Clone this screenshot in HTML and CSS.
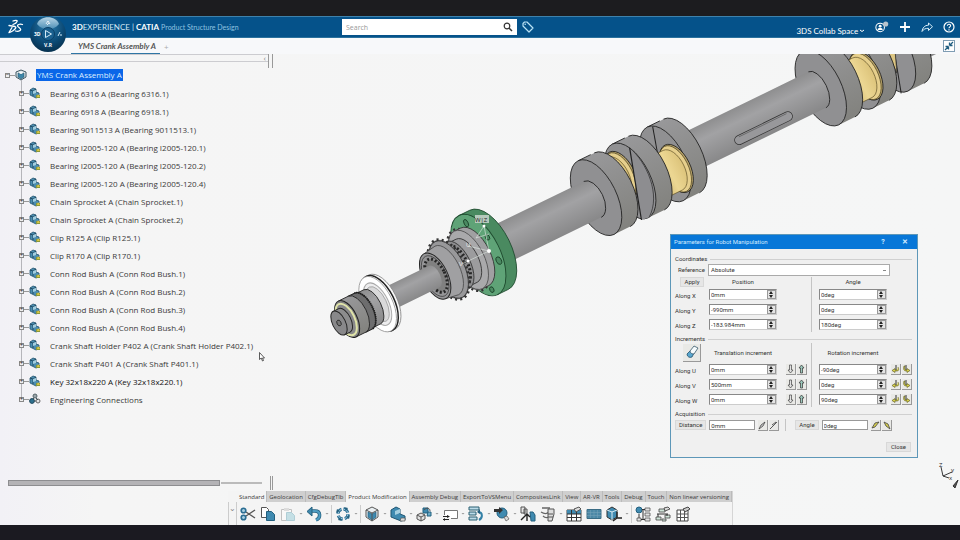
FILE: index.html
```html
<html lang="en">

<head>
  <meta charset="UTF-8">
  <meta name="viewport" content="width=device-width, initial-scale=1.0">
  <title>Product Structure Design</title>
  <link rel="stylesheet" href="styles.css">
</head>

<body>

  <!-- shared icons -->
  <svg class="sprite" width="0" height="0" aria-hidden="true">
    <symbol id="i-part" viewBox="0 0 12 12">
      <path d="M1 3l3-2 3 1v3l3 1v4l-3 1-6-3z" fill="#4b8db0" stroke="#24546f" stroke-width=".8" />
      <path d="M1 3l3 1v5M4 4l3-2" fill="none" stroke="#173f57" stroke-width=".8" />
      <path d="M4 4l3-1v3l-3 1z" fill="#a4cfe0" />
      <path d="M7 8h4v3H7z" fill="#8b9a3a" />
      <path d="M9 7l2 3H8z" fill="#dcc64a" />
    </symbol>
    <symbol id="i-root" viewBox="0 0 12 12">
      <path d="M1 3l5-2 5 2v5l-5 3-5-3z" fill="#dfe8ec" stroke="#3f5763" />
      <path d="M3 4l3 1 3-1v4l-3 2-3-2z" fill="#3d86a8" stroke="#28566c" stroke-width=".6" />
      <path d="M4 4l2-1 2 1-2 1z" fill="#fff" />
    </symbol>
    <symbol id="i-conn" viewBox="0 0 12 12">
      <circle cx="6" cy="3" r="2" fill="#9aa5aa" stroke="#56646b" />
      <circle cx="3" cy="8" r="2.400" fill="#2f718f" stroke="#1d475c" />
      <circle cx="9" cy="8" r="2" fill="#e6e6e6" stroke="#666" />
      <path d="M5 5L4 6M7 5l2 2M5 8h2" stroke="#44545b" />
    </symbol>
    <symbol id="i-up" viewBox="0 0 9 10">
      <path d="M4.500 1l2.500 3H5.500v5h-2V4H2z" fill="#9cc9bd" stroke="#333" stroke-width=".7" />
    </symbol>
    <symbol id="i-down" viewBox="0 0 9 10">
      <path d="M4.500 9l2.500-3H5.500V1h-2v5H2z" fill="#e2e2e2" stroke="#444" stroke-width=".7" />
    </symbol>
    <symbol id="i-rotl" viewBox="0 0 9 10">
      <path d="M5 1v5" stroke="#333" />
      <path d="M7 3c1 2 1 4-1 4H4v1.500L1 6.500l3-2V6h2" fill="#d7cf4b" stroke="#5c5a20" stroke-width=".6" />
    </symbol>
    <symbol id="i-rotr" viewBox="0 0 9 10">
      <path d="M4 1v5" stroke="#333" />
      <path d="M2 2c-1 3 0 5 2 5h1v1.500l3-2-3-2V6H4C3 6 2 4 3 2z" fill="#d7cf4b" stroke="#5c5a20" stroke-width=".6" />
    </symbol>
  </svg>

  <div class="band band-top"></div>

  <header class="header">
    <div class="header-left">
      <svg class="logo" viewBox="0 0 16 16" aria-hidden="true">
        <g fill="none" stroke="#fff" stroke-width="1.300" stroke-linecap="round" stroke-linejoin="round">
          <path d="M5 2c2-1 5-1 4 .5C8.500 4 6.500 5 5 5.500" />
          <path d="M1 6.500l6 1c2 .6 0 3-2 4.200-1.300.8-3 1.600-4 1.800L4 8.500" />
          <path d="M14.500 5.500c-2-.6-4.500-.2-5 1-.4 1.300 3.500 2.700 3.200 4.200-.3 1.600-3.200 2-5.200 1.300" />
        </g>
      </svg>
      <div class="brand"><b>3D</b>EXPERIENCE | <b>CATIA</b> <span class="brand-app">Product Structure Design</span></div>
    </div>
    <form class="search">
      <input class="search-input" type="text" placeholder="Search" aria-label="Search">
      <button class="search-btn" type="button" aria-label="Run search">
        <svg viewBox="0 0 10 10"><circle cx="4" cy="4" r="2.800" fill="none" stroke="#333" stroke-width="1.200" /><path d="M6 6l3 3" stroke="#333" stroke-width="1.500" /></svg>
      </button>
    </form>
    <button class="icon-btn" type="button" aria-label="Tags">
      <svg viewBox="0 0 12 12"><path d="M1 2.500L2.500 1H5l6 6-4 4-6-6z" fill="none" stroke="#b9e2f5" stroke-width="1.200" stroke-linejoin="round" /><circle cx="3.200" cy="3.200" r=".8" fill="#b9e2f5" /></svg>
    </button>
    <div class="header-right">
      <button class="space-btn" type="button">3DS Collab Space
        <svg viewBox="0 0 6 4"><path d="M1 1l2 1.500L5 1" fill="none" stroke="#fff" /></svg>
      </button>
      <button class="icon-btn" type="button" aria-label="Profile">
        <svg viewBox="0 0 16 14"><circle cx="6" cy="7.500" r="5" fill="none" stroke="#fff" stroke-width="1.200" /><circle cx="6" cy="6" r="1.700" fill="#fff" /><path d="M3 10.500c0-3.500 6-3.500 6 0z" fill="#fff" /><circle cx="12.500" cy="3.500" r="3" fill="#b9c4cd" /></svg>
      </button>
      <button class="icon-btn" type="button" aria-label="Add">
        <svg viewBox="0 0 12 12"><path d="M6 1v10M1 6h10" stroke="#fff" stroke-width="1.800" /></svg>
      </button>
      <button class="icon-btn" type="button" aria-label="Share">
        <svg viewBox="0 0 12 12"><path d="M7.500 2v2.200C3.500 4.200 1.500 7 1 10.500c1.700-2.500 3.500-3.200 6.500-3.200v2.200l4-3.800z" fill="none" stroke="#d7edf8" stroke-linejoin="round" /></svg>
      </button>
      <button class="icon-btn" type="button" aria-label="Help">
        <svg viewBox="0 0 12 12"><circle cx="6" cy="6" r="5" fill="none" stroke="#fff" stroke-width="1.200" /><path d="M4.400 4.800c0-2.300 3.400-2 3.200 0C7.500 6 6 5.900 6 7.300M6 8.200v1.200" fill="none" stroke="#fff" stroke-width="1.100" /></svg>
      </button>
    </div>
  </header>

  <svg class="compass" viewBox="0 0 38 38" role="img" aria-label="Compass">
    <defs>
      <radialGradient id="ball" cx=".5" cy=".3" r=".7">
        <stop offset="0" stop-color="#2f7fae" />
        <stop offset=".6" stop-color="#0d4d79" />
        <stop offset="1" stop-color="#07314f" />
      </radialGradient>
      <linearGradient id="gloss" x1="0" y1="0" x2="0" y2="1">
        <stop offset="0" stop-color="#b7d5e6" />
        <stop offset="1" stop-color="#4d8fb6" />
      </linearGradient>
    </defs>
    <circle cx="19" cy="19" r="18" fill="url(#ball)" />
    <path d="M8 9C11 0 27 0 30 9c-3 4-7 5-11 5S11 13 8 9z" fill="url(#gloss)" />
    <circle cx="19" cy="19" r="6.500" fill="#1a608f" stroke="#0a3f66" />
    <path d="M16.500 15.500l6 3.500-6 3.500z" fill="none" stroke="#d5ebf7" />
    <path d="M17 9l2-3 2 3M18 10l2-2" fill="none" stroke="#fff" stroke-width=".8" />
    <path d="M29 21l2-4M31 20h2" fill="none" stroke="#d5ebf7" />
    <text x="5" y="21" class="compass-text">3D</text>
    <text x="15" y="32" class="compass-text">V.R</text>
  </svg>

  <nav class="tabs">
    <a class="tab" href="#">YMS Crank Assembly A</a>
    <button class="tab-add" type="button" aria-label="New tab">+</button>
    <button class="collapse" type="button" aria-label="Exit full view">
      <svg viewBox="0 0 10 10"><path d="M5.500 4.500V1.500M5.500 4.500h3M5.500 4.500L9 1M4.500 5.500v3M4.500 5.500h-3M4.500 5.500L1 9" stroke="#1f5d80" stroke-width="1.300" fill="none" /></svg>
    </button>
  </nav>

  <main class="workspace">

    <!-- 3D view: everything sits on the crank axis, x runs along it -->
    <svg class="scene" viewBox="0 54 960 471" preserveAspectRatio="xMidYMid slice" role="img" aria-label="Crank assembly">
      <defs>
        <linearGradient id="shaft" x1="0" y1="0" x2="0" y2="1">
          <stop offset="0" stop-color="#8e8e8f" />
          <stop offset=".35" stop-color="#a2a2a4" />
          <stop offset="1" stop-color="#888889" />
        </linearGradient>
        <linearGradient id="rim" x1="0" y1="0" x2="0" y2="1">
          <stop offset="0" stop-color="#98989a" />
          <stop offset="1" stop-color="#82827e" />
        </linearGradient>
        <linearGradient id="gold" x1="0" y1="0" x2="1" y2="0">
          <stop offset="0" stop-color="#d0b76e" />
          <stop offset=".5" stop-color="#ecd793" />
          <stop offset="1" stop-color="#dcc37a" />
        </linearGradient>
        <g id="disc">
          <path d="M0-41H18A20.500 41 0 0 1 18 41H0z" fill="url(#rim)" />
          <path d="M0-41H14M18-41A20.500 41 0 0 1 18 41" fill="none" stroke="#222" stroke-width=".8" />
          <ellipse rx="20.500" ry="41" fill="#909092" stroke="#222" stroke-width=".8" />
        </g>
        <g id="pin">
          <ellipse rx="14" ry="26" fill="#b8a368" stroke="#222" stroke-width=".8" />
          <ellipse cx="-1" rx="13" ry="25" fill="#e6cf8c" stroke="#3c3418" stroke-width=".6" />
          <path d="M-22-22H-4A12 22 0 0 1-4 22H-22z" fill="url(#gold)" stroke="#5b4c22" stroke-width=".6" />
        </g>
      </defs>

      <g transform="translate(339 323) rotate(-26)">
        <path d="M631-20H700V20H631z" fill="url(#shaft)" />

        <!-- rear crank throw -->
        <use href="#disc" x="613" />
        <path d="M627-30L606 40" stroke="#222" />
        <path d="M603-38C612-36 620-20 618 2L611 20C612-8 608-20 598-34z" fill="#dcc582" stroke="#333" stroke-width=".7" />
        <use href="#disc" x="574" />
        <use href="#pin" x="582" y="9" />
        <use href="#disc" x="536" />

        <!-- shaft with keyway -->
        <path d="M381-20H532A10 20 0 0 1 532 20H381z" fill="url(#shaft)" />
        <path d="M532-20A10 20 0 0 1 532 20" fill="none" stroke="#222" stroke-width=".8" />
        <path d="M440 11H494" stroke="#333" stroke-width="10" stroke-linecap="round" />
        <path d="M440 11H494" stroke="#98989b" stroke-width="8.600" stroke-linecap="round" />
        <path d="M441 8H494" stroke="#555" stroke-width=".6" />

        <!-- front crank throw -->
        <use href="#disc" x="363" />
        <path d="M368-39L361-14" stroke="#222" />
        <use href="#pin" x="371" y="9" />
        <use href="#disc" x="324" />
        <use href="#pin" x="318" y="-9" />
        <path d="M338-30C346-14 348 26 326 41L317 40z" fill="#8d8d90" />
        <path d="M338-30L317 40" stroke="#222" stroke-width="1.200" />
        <path d="M338-30C347-10 346 26 325 41" fill="none" stroke="#222" stroke-width=".6" />
        <use href="#disc" x="286" />

        <path d="M167-20H282A11 20 0 0 1 282 20H167z" fill="url(#shaft)" />
        <path d="M282-20A11 20 0 0 1 282 20" fill="none" stroke="#222" stroke-width=".8" />

        <!-- green flange -->
        <path d="M155-44H167A22 44 0 0 1 167 44H155z" fill="#4a8a60" stroke="#1e4a2e" stroke-width=".8" />
        <ellipse cx="155" rx="22" ry="44" fill="#5fa377" stroke="#1e4a2e" stroke-width=".9" />
        <g fill="#4b8a62" stroke="#153a22" stroke-width=".8">
          <ellipse cx="158" cy="-34" rx="2" ry="4" />
          <ellipse cx="171" cy="-12" rx="2" ry="3" />
          <ellipse cx="171" cy="14" rx="2.500" ry="4" />
          <ellipse cx="152" cy="37" rx="2" ry="3" />
        </g>

        <!-- sprockets -->
        <ellipse cx="144" rx="17" ry="33" fill="#8a8a8b" stroke="#333" stroke-width="3" stroke-dasharray="2 3" />
        <path d="M144-32H151A16 32 0 0 1 151 32H144z" fill="#a0a0a2" stroke="#333" stroke-width=".8" />
        <ellipse cx="144" rx="16" ry="32" fill="#a9a9ab" stroke="#444" stroke-width=".7" />
        <path d="M132-24H142A12 24 0 0 1 142 24H132z" fill="#9c9c9e" stroke="#333" stroke-width=".8" />
        <ellipse cx="132" rx="13" ry="26" fill="#8c8c8e" stroke="#333" stroke-width=".8" />
        <ellipse cx="132" rx="10" ry="21" fill="none" stroke="#262626" stroke-width="3" stroke-dasharray="2 2" />
        <ellipse cx="122" rx="17" ry="32" fill="#8a8a8b" stroke="#333" stroke-width="3" stroke-dasharray="2 3" />
        <ellipse cx="122" rx="16" ry="31" fill="#98989a" stroke="#333" stroke-width=".8" />
        <path d="M107-25L120-27A13 27 0 0 1 120 27L107 25z" fill="#a0a0a2" stroke="#444" stroke-width=".7" />
        <ellipse cx="107" rx="12.500" ry="25" fill="#959597" stroke="#262626" />
        <ellipse cx="108" rx="9" ry="18" fill="#808080" stroke="#262626" stroke-width="3" stroke-dasharray="2 2" />
        <ellipse cx="107" rx="11" ry="22" fill="none" stroke="#2c2c2c" stroke-width=".6" />

        <path d="M47-12H106A6 12 0 0 1 106 12H47z" fill="url(#shaft)" />

        <!-- white seal ring -->
        <path d="M43-30H48A15 30 0 0 1 48 30H43z" fill="#f7f7f7" stroke="#888" stroke-width=".8" />
        <ellipse cx="45" rx="15" ry="30" fill="#fff" stroke="#222" stroke-width="1.500" />
        <ellipse cx="43" rx="15" ry="30" fill="#fff" stroke="#999" stroke-width=".8" />
        <ellipse cx="43" rx="11" ry="23" fill="#ededee" stroke="#aaa" />
        <ellipse cx="43" rx="9" ry="19" fill="#d9d9da" stroke="#999" stroke-width=".7" />

        <!-- shaft nose -->
        <path d="M26-19H37A9 19 0 0 1 37 19H26z" fill="url(#shaft)" stroke="#222" stroke-width=".8" />
        <path d="M20-20H27A10 20 0 0 1 27 20H20z" fill="#6d6d6e" stroke="#222" />
        <path d="M27-20A10 20 0 0 1 27 20" fill="none" stroke="#1c1c1c" stroke-width="2" stroke-dasharray="1 1" />
        <path d="M9-20H20A10 20 0 0 1 20 20H9z" fill="url(#rim)" stroke="#222" stroke-width=".8" />
        <ellipse cx="9" rx="10" ry="20" fill="#808081" stroke="#222" />
        <ellipse cx="8" rx="8.500" ry="17" fill="#88888a" stroke="#dfe3a8" stroke-width="2" />
        <path d="M0-13H6A6.500 13 0 0 1 6 13H0z" fill="#8c8c8d" stroke="#222" stroke-width=".9" />
        <ellipse rx="6.500" ry="13" fill="#88888a" stroke="#222" />
        <ellipse rx="2" ry="3" fill="#777" stroke="#222" stroke-width=".8" />
      </g>

      <!-- robot handle -->
      <path d="M484 226L489 251L468 246M484 226l-8 12M489 251l-27 13M476 238l13-4" fill="none" stroke="#dfe9e2" stroke-width=".6" />
      <circle cx="489" cy="251" r="2" fill="#fff" />
      <circle cx="484" cy="226" r="1.500" fill="#fff" />
      <circle cx="468" cy="261" r="1.500" fill="#fff" />
      <rect x="475" y="215" width="14" height="8" fill="#b5c9bb" />
      <text x="475" y="222" class="axis-label">W|Z</text>
      <text x="466" y="247" class="axis-label light">U</text>
      <text x="459" y="266" class="axis-label light">V</text>

      <!-- view axes -->
      <path d="M943 476l-2-9M943 476l9-4M943 476l6 2" fill="none" stroke="#222" stroke-width=".9" />
      <text x="939" y="467" class="axis-label">Z</text>
      <text x="951" y="472" class="axis-label">y</text>
      <text x="949" y="480" class="axis-label">x</text>
      <path d="M958 480l-3 8-2-2z" fill="#555" stroke="#333" />
    </svg>

    <section class="tree-panel" aria-label="Structure tree">
      <div class="panel-bar"><span>‹</span></div>
      <ul class="tree">
        <li class="root"><button class="expander" type="button" aria-label="Collapse">−</button><svg><use href="#i-root" /></svg><span class="selected">YMS Crank Assembly A</span></li>
        <li><button class="expander" type="button" aria-label="Expand">+</button><svg><use href="#i-part" /></svg><span>Bearing 6316 A (Bearing 6316.1)</span></li>
        <li><button class="expander" type="button" aria-label="Expand">+</button><svg><use href="#i-part" /></svg><span>Bearing 6918 A (Bearing 6918.1)</span></li>
        <li><button class="expander" type="button" aria-label="Expand">+</button><svg><use href="#i-part" /></svg><span>Bearing 9011513 A (Bearing 9011513.1)</span></li>
        <li><button class="expander" type="button" aria-label="Expand">+</button><svg><use href="#i-part" /></svg><span>Bearing I2005-120 A (Bearing I2005-120.1)</span></li>
        <li><button class="expander" type="button" aria-label="Expand">+</button><svg><use href="#i-part" /></svg><span>Bearing I2005-120 A (Bearing I2005-120.2)</span></li>
        <li><button class="expander" type="button" aria-label="Expand">+</button><svg><use href="#i-part" /></svg><span>Bearing I2005-120 A (Bearing I2005-120.4)</span></li>
        <li><button class="expander" type="button" aria-label="Expand">+</button><svg><use href="#i-part" /></svg><span>Chain Sprocket A (Chain Sprocket.1)</span></li>
        <li><button class="expander" type="button" aria-label="Expand">+</button><svg><use href="#i-part" /></svg><span>Chain Sprocket A (Chain Sprocket.2)</span></li>
        <li><button class="expander" type="button" aria-label="Expand">+</button><svg><use href="#i-part" /></svg><span>Clip R125 A (Clip R125.1)</span></li>
        <li><button class="expander" type="button" aria-label="Expand">+</button><svg><use href="#i-part" /></svg><span>Clip R170 A (Clip R170.1)</span></li>
        <li><button class="expander" type="button" aria-label="Expand">+</button><svg><use href="#i-part" /></svg><span>Conn Rod Bush A (Conn Rod Bush.1)</span></li>
        <li><button class="expander" type="button" aria-label="Expand">+</button><svg><use href="#i-part" /></svg><span>Conn Rod Bush A (Conn Rod Bush.2)</span></li>
        <li><button class="expander" type="button" aria-label="Expand">+</button><svg><use href="#i-part" /></svg><span>Conn Rod Bush A (Conn Rod Bush.3)</span></li>
        <li><button class="expander" type="button" aria-label="Expand">+</button><svg><use href="#i-part" /></svg><span>Conn Rod Bush A (Conn Rod Bush.4)</span></li>
        <li><button class="expander" type="button" aria-label="Expand">+</button><svg><use href="#i-part" /></svg><span>Crank Shaft Holder P402 A (Crank Shaft Holder P402.1)</span></li>
        <li><button class="expander" type="button" aria-label="Expand">+</button><svg><use href="#i-part" /></svg><span>Crank Shaft P401 A (Crank Shaft P401.1)</span></li>
        <li class="strong"><button class="expander" type="button" aria-label="Expand">+</button><svg><use href="#i-part" /></svg><span>Key 32x18x220 A (Key 32x18x220.1)</span></li>
        <li><button class="expander" type="button" aria-label="Expand">+</button><svg><use href="#i-conn" /></svg><span>Engineering Connections</span></li>
      </ul>
      <div class="scrollbar"><div class="thumb"></div><div class="track"></div><div class="splitter"></div></div>
    </section>

    <svg class="cursor" viewBox="0 0 6 10" aria-hidden="true"><path d="M.5.5v7l1.700-1.500L3.500 9l1-.5-1-2.500h2z" fill="#fff" stroke="#333" stroke-width=".8" /></svg>

    <section class="dialog" role="dialog" aria-label="Parameters for Robot Manipulation">
      <div class="dialog-title">
        <span>Parameters for Robot Manipulation</span>
        <button type="button" aria-label="Help">?</button>
        <button type="button" aria-label="Close window">✕</button>
      </div>
      <div class="dialog-body">
        <div class="legend">Coordinates</div>
        <div class="reference">
          <label for="ref">Reference</label>
          <select id="ref">
            <option>Absolute</option>
          </select>
        </div>

        <div class="params">
          <button class="btn" type="button">Apply</button>
          <span class="col-head">Position</span>
          <span class="col-head angle">Angle</span>

          <label for="px">Along X</label>
          <span class="spin"><input id="px" type="text" value="0mm"><button type="button" tabindex="-1" aria-label="Step"></button></span>
          <span class="spin angle"><input aria-label="Angle X" type="text" value="0deg"><button type="button" tabindex="-1" aria-label="Step"></button></span>

          <label for="py">Along Y</label>
          <span class="spin"><input id="py" type="text" value="-990mm"><button type="button" tabindex="-1" aria-label="Step"></button></span>
          <span class="spin angle"><input aria-label="Angle Y" type="text" value="0deg"><button type="button" tabindex="-1" aria-label="Step"></button></span>

          <label for="pz">Along Z</label>
          <span class="spin"><input id="pz" type="text" value="-183.984mm"><button type="button" tabindex="-1" aria-label="Step"></button></span>
          <span class="spin angle"><input aria-label="Angle Z" type="text" value="180deg"><button type="button" tabindex="-1" aria-label="Step"></button></span>
        </div>

        <div class="legend">Increments</div>
        <div class="params increments">
          <button class="tool eraser" type="button" aria-label="Reset increments">
            <svg viewBox="0 0 14 14"><path d="M2 9l3-3 4 2-2 4c-2 1-5 0-5-3z" fill="#5aa7cf" stroke="#23506b" stroke-width=".8" /><path d="M5 6l4-5 4 2-4 6c-2 0-4-1-4-3z" fill="#f6fbfd" stroke="#38586a" stroke-width=".8" /></svg>
          </button>
          <span class="col-head">Translation increment</span>
          <span class="col-head angle">Rotation increment</span>

          <label for="tu">Along U</label>
          <span class="spin"><input id="tu" type="text" value="0mm"><button type="button" tabindex="-1" aria-label="Step"></button></span>
          <span class="tools"><button class="tool" type="button" aria-label="Minus U"><svg><use href="#i-down" /></svg></button><button class="tool" type="button" aria-label="Plus U"><svg><use href="#i-up" /></svg></button></span>
          <span class="spin angle"><input aria-label="Rotation U" type="text" value="-90deg"><button type="button" tabindex="-1" aria-label="Step"></button></span>
          <span class="tools rot"><button class="tool" type="button" aria-label="Rotate minus U"><svg><use href="#i-rotl" /></svg></button><button class="tool" type="button" aria-label="Rotate plus U"><svg><use href="#i-rotr" /></svg></button></span>

          <label for="tv">Along V</label>
          <span class="spin"><input id="tv" type="text" value="500mm"><button type="button" tabindex="-1" aria-label="Step"></button></span>
          <span class="tools"><button class="tool" type="button" aria-label="Minus V"><svg><use href="#i-down" /></svg></button><button class="tool" type="button" aria-label="Plus V"><svg><use href="#i-up" /></svg></button></span>
          <span class="spin angle"><input aria-label="Rotation V" type="text" value="0deg"><button type="button" tabindex="-1" aria-label="Step"></button></span>
          <span class="tools rot"><button class="tool" type="button" aria-label="Rotate minus V"><svg><use href="#i-rotl" /></svg></button><button class="tool" type="button" aria-label="Rotate plus V"><svg><use href="#i-rotr" /></svg></button></span>

          <label for="tw">Along W</label>
          <span class="spin"><input id="tw" type="text" value="0mm"><button type="button" tabindex="-1" aria-label="Step"></button></span>
          <span class="tools"><button class="tool" type="button" aria-label="Minus W"><svg><use href="#i-down" /></svg></button><button class="tool" type="button" aria-label="Plus W"><svg><use href="#i-up" /></svg></button></span>
          <span class="spin angle"><input aria-label="Rotation W" type="text" value="90deg"><button type="button" tabindex="-1" aria-label="Step"></button></span>
          <span class="tools rot"><button class="tool" type="button" aria-label="Rotate minus W"><svg><use href="#i-rotl" /></svg></button><button class="tool" type="button" aria-label="Rotate plus W"><svg><use href="#i-rotr" /></svg></button></span>
        </div>

        <div class="legend">Acquisition</div>
        <div class="acquisition">
          <label class="btn" for="dist">Distance</label>
          <input id="dist" type="text" value="0mm">
          <span class="tools"><button class="tool" type="button" aria-label="Measure"><svg viewBox="0 0 9 10"><path d="M1 9l2-4 4-3-2 4z" fill="#ccc" stroke="#333" stroke-width=".7" /></svg></button><button class="tool" type="button" aria-label="Measure between"><svg viewBox="0 0 9 10"><path d="M1 9l7-7M3 5l4-3" stroke="#333" stroke-width=".8" /></svg></button></span>
          <span class="divider"></span>
          <label class="btn" for="ang">Angle</label>
          <input id="ang" type="text" value="0deg">
          <span class="tools"><button class="tool" type="button" aria-label="Measure angle"><svg viewBox="0 0 9 10"><path d="M1 8l3-1 4-5-4 1z" fill="#d7cf4b" stroke="#444" stroke-width=".8" /></svg></button><button class="tool" type="button" aria-label="Measure angle back"><svg viewBox="0 0 9 10"><path d="M2 2l4 2 2 5-4-3z" fill="#d7cf4b" stroke="#444" stroke-width=".8" /></svg></button></span>
        </div>
        <div class="dialog-foot"><button class="btn" type="button">Close</button></div>
      </div>
    </section>

    <section class="actionbar" aria-label="Action bar">
      <div class="action-tabs">
        <button class="active" type="button">Standard</button>
        <button type="button">Geolocation</button>
        <button type="button">CfgDebugTlb</button>
        <button class="active" type="button">Product Modification</button>
        <button type="button">Assembly Debug</button>
        <button type="button">ExportToVSMenu</button>
        <button type="button">CompositesLink</button>
        <button type="button">View</button>
        <button type="button">AR-VR</button>
        <button type="button">Tools</button>
        <button type="button">Debug</button>
        <button type="button">Touch</button>
        <button type="button">Non linear versioning</button>
      </div>
      <div class="action-tools">
        <button class="more" type="button" aria-label="More">⌄</button>
        <button type="button" aria-label="Cut"><svg viewBox="0 0 16 16"><path d="M6 6l9 6M6 10l9-6" stroke="#555" stroke-width="1.400" /><circle cx="3.500" cy="4.500" r="2.300" fill="#a9d0e3" stroke="#2b6d92" stroke-width="1.600" /><circle cx="3.500" cy="11.500" r="2.300" fill="#a9d0e3" stroke="#2b6d92" stroke-width="1.600" /></svg></button>
        <button type="button" aria-label="Copy"><svg viewBox="0 0 16 16"><path d="M1.500 1.500h5l2 2v8h-7z" fill="#fff" stroke="#555" /><path d="M6.500 5.500h5l3 3v6h-8z" fill="#3f8ab0" stroke="#23607f" /></svg></button>
        <button type="button" aria-label="Paste"><svg viewBox="0 0 16 16" opacity=".4"><path d="M1.500 3.500h10v11h-10z" fill="#fff" stroke="#777" /><path d="M4 2h5v3H4z" fill="#bbb" /><path d="M6.500 6.500h5l3 3v5h-8z" fill="#7fc0cf" stroke="#4a97ab" /></svg></button>
        <i class="caret"></i>
        <button type="button" aria-label="Undo"><svg viewBox="0 0 16 16"><path d="M3 5h6c6 0 6 7 1 9" fill="none" stroke="#24607f" stroke-width="3.400" /><path d="M3 5h6c6 0 6 7 1 9" fill="none" stroke="#4f9cc2" stroke-width="2" /><path d="M1 5.500L6 1v9z" fill="#3d88ad" stroke="#24607f" /></svg></button>
        <i class="caret"></i>
        <i class="sep"></i>
        <button type="button" aria-label="Update"><svg viewBox="0 0 16 16"><circle cx="8" cy="8" r="5" fill="none" stroke="#2b6d92" stroke-width="3" stroke-dasharray="5.800 2" /><circle cx="8" cy="8" r="5" fill="none" stroke="#9bcbe0" stroke-width="1" stroke-dasharray="5.800 2" /><path d="M9 1l4 1-2 3zM15 9l-1 4-3-2zM7 15l-4-1 2-3zM1 7l1-4 3 2z" fill="#24607f" /></svg></button>
        <i class="caret"></i>
        <i class="sep"></i>
        <button type="button" aria-label="New product"><svg viewBox="0 0 16 16"><path d="M2 4l6-3 6 3v7l-6 4-6-4z" fill="#e9eff2" stroke="#555" /><path d="M4 6l4 2 4-2v5l-4 3-4-3z" fill="#3f8ab0" stroke="#23607f" stroke-width=".7" /><path d="M2 4l6 3 6-3M8 7v8" fill="none" stroke="#555" /></svg></button>
        <i class="caret"></i>
        <button type="button" aria-label="New part"><svg viewBox="0 0 16 16"><path d="M1 4l5-3 4 2v5l5 2v4l-4 1-10-4z" fill="#3f8ab0" stroke="#1f5673" /><path d="M5 5l5-2v4l-5 2z" fill="#a4cfe0" /><path d="M11 12h4v3h-5z" fill="#ddd" stroke="#555" stroke-width=".7" /></svg></button>
        <i class="caret"></i>
        <button type="button" aria-label="Insert existing"><svg viewBox="0 0 16 16"><path d="M7 2h5v5H7z" fill="#3f8ab0" stroke="#23607f" /><path d="M12 6h3v4h-4z" fill="#6dadc9" stroke="#23607f" /><path d="M1 9l4-2 4 2v4l-4 2-4-2z" fill="#e3e3e3" stroke="#555" /><path d="M1 9l4 2 4-2M5 11v4M8 4c3-3 6-2 6 1" fill="none" stroke="#555" /></svg></button>
        <i class="caret"></i>
        <button type="button" aria-label="Replace"><svg viewBox="0 0 16 16"><path d="M2.500 9V4.500h13v8H9" fill="#fff" stroke="#777" /><path d="M1 10.500h6M7 13.500H1" stroke="#222" /><path d="M5 9l3 1.500L5 12zM3 12v3L1 13.500z" fill="#222" /></svg></button>
        <i class="caret"></i>
        <button type="button" aria-label="Reorder"><svg viewBox="0 0 16 16"><path d="M1 1h10v3H1zM1 6h7v3H1zM1 11h8v3H1z" fill="#bcdbe8" stroke="#2b6073" /><path d="M10 6c5 0 5 6 1 8" fill="none" stroke="#3380a6" stroke-width="2" /><path d="M9 6l3-3v5z" fill="#24607f" /></svg></button>
        <i class="caret"></i>
        <button type="button" aria-label="Assemble"><svg viewBox="0 0 16 16"><circle cx="8" cy="7" r="5" fill="#3f8ab0" stroke="#23607f" /><path d="M0 3h5V1l4 3-4 4V6H0z" fill="#333" /><path d="M10 11l3-1 2 3-3 2z" fill="#ddd" stroke="#555" stroke-width=".7" /></svg></button>
        <i class="caret"></i>
        <button type="button" aria-label="Move"><svg viewBox="0 0 16 16"><path d="M1 1h4v6H1zM4 3h3v5H4z" fill="#e3e3e3" stroke="#555" /><path d="M7 8l-6 6M7 8v7M7 8l3 3" stroke="#222" stroke-width="1.400" /><path d="M10 6h3l2 3v6h-4z" fill="#3f8ab0" stroke="#23607f" /></svg></button>
        <button type="button" aria-label="Snap"><svg viewBox="0 0 16 16"><path d="M2 2h8M1 6c3 2 6 2 8 0M3 10c2 2 5 2 7 0" fill="none" stroke="#666" stroke-width="1.300" /><path d="M8 3h6v5l-2 7H8z" fill="#ddd" stroke="#555" /><path d="M8 8h5M8 11h5" stroke="#555" /></svg></button>
        <i class="caret"></i>
        <button type="button" aria-label="Table"><svg viewBox="0 0 16 16"><path d="M1 4h14v11H1z" fill="#fff" stroke="#444" /><path d="M1 4h14v4H1z" fill="#3f8ab0" /><path d="M1 8h14M1 11.500h14M5.500 4v11M10.500 4v11" stroke="#333" /><path d="M8 3l5-2 2 2-5 3z" fill="#ddd" stroke="#555" /></svg></button>
        <button type="button" aria-label="Grid"><svg viewBox="0 0 16 16"><path d="M1 3.500h14v9H1z" fill="#4c88a6" stroke="#3a6c85" /><path d="M1 6.500h14M1 9.500h14M4.500 4v8M8 4v8M11.500 4v8" stroke="#7aa5ba" stroke-width=".5" /></svg></button>
        <button type="button" aria-label="Axis system"><svg viewBox="0 0 16 16"><path d="M1 4l5-3 5 3v7l-5 3-5-3z" fill="#3f8ab0" stroke="#333" /><path d="M1 4l5 2 5-2M6 6v8" fill="none" stroke="#dcecf3" /><path d="M11 6v6h5M11 12l-4 3" fill="none" stroke="#222" stroke-width="1.300" /></svg></button>
        <i class="caret"></i>
        <i class="sep"></i>
        <button type="button" aria-label="Expand tree"><svg viewBox="0 0 16 16"><circle cx="4" cy="4" r="3" fill="#3f8ab0" stroke="#23607f" /><path d="M10 2h5v3h-5zM10 7h5v3h-5zM10 12h5v3h-5zM2 12h4v3H2z" fill="#e3e3e3" stroke="#555" stroke-width=".8" /><path d="M7 3.500h3M4 8v4M6 13.500h4M8 4v9" stroke="#333" /></svg></button>
        <button type="button" aria-label="Tree properties"><svg viewBox="0 0 16 16"><path d="M4 3h6v3H4zM10 9h5v3h-5zM1 11h5v3H1zM7 13h4v2H7z" fill="#cfe4d9" stroke="#444" stroke-width=".8" /><path d="M9 2l4-1 2 2-5 2z" fill="#ddd" stroke="#555" /><path d="M2 8h11M3 8v3M12 8v2" stroke="#333" /></svg></button>
        <button type="button" aria-label="Report"><svg viewBox="0 0 16 16"><path d="M2 4h11v11H2z" fill="#fff" stroke="#444" /><path d="M2 8h11M2 11.500h11M5.500 4v11M9.500 4v11" stroke="#555" /><path d="M8 3l5-2 2 2-5 3z" fill="#ccc" stroke="#444" /></svg></button>
      </div>
    </section>

  </main>

  <div class="band band-bottom"></div>

</body>

</html>
```

FILE: styles.css
```css
* {
  padding: 0;
  margin: 0;
  box-sizing: border-box;
}

html {
  height: 100%;
}

body {
  height: 100%;
  display: flex;
  flex-direction: column;
  position: relative;
  overflow: hidden;
  background-color: #f4f4f6;
  color: #3a3a3a;
  font-family: "Open Sans", "Noto Sans", sans-serif;
  font-size: 8px;
}

button,
input,
select {
  font: inherit;
  color: inherit;
  border: none;
  background: none;
}

.sprite {
  position: absolute;
}

.band {
  flex: none;
  height: 16px;
  background-color: #1c1c1f;
}

.band-bottom {
  height: 15px;
  background-color: #1b1a21;
}

/* header */
.header {
  flex: none;
  height: 22px;
  display: flex;
  align-items: center;
  gap: 5px;
  padding: 0 5px 0 8px;
  border-top: 1px solid #3f82ab;
  border-bottom: 1px solid #2b719d;
  background-color: #05528a;
  color: #fff;
}

.header-left {
  flex: 0 0 329px;
  display: flex;
  align-items: center;
  gap: 48px;
}

.logo {
  width: 16px;
  height: 16px;
}

.brand {
  color: #d3e6f2;
  font-family: Lato, sans-serif;
  white-space: nowrap;
}

.brand b {
  color: #fff;
}

.brand-app {
  color: #8fc3e0;
  font-size: 7px;
}

.search {
  width: 175px;
  height: 16px;
  display: flex;
  align-items: center;
  padding: 0 4px;
  background-color: #fff;
}

.search-input {
  flex: 1;
  min-width: 0;
  font-size: 7px;
  outline: none;
}

.search-input::placeholder {
  color: #999;
}

.search-btn {
  width: 10px;
  height: 10px;
  display: flex;
}

.icon-btn {
  height: 12px;
  display: flex;
}

.icon-btn svg {
  height: 12px;
}

.header-right {
  margin-left: auto;
  display: flex;
  align-items: center;
  gap: 10px;
}

.space-btn {
  display: flex;
  align-items: center;
  gap: 1px;
  padding-top: 7px;
  font-family: Lato, sans-serif;
}

.space-btn svg {
  width: 6px;
  height: 4px;
}

.compass {
  position: absolute;
  top: 15px;
  left: 29px;
  width: 38px;
  height: 38px;
}

.compass-text {
  font: bold 5px "Open Sans", sans-serif;
  fill: #fff;
}

/* document tabs */
.tabs {
  flex: none;
  height: 16px;
  display: flex;
  align-items: center;
  gap: 4px;
  padding: 0 5px 0 71px;
  background-color: #f7f8fa;
}

.tab {
  height: 15px;
  padding: 0 4px 0 7px;
  border-bottom: 1px solid #2f76a5;
  color: #555;
  font: italic bold 8px/14px Lato, sans-serif;
  text-decoration: none;
}

.tab-add {
  color: #aaa;
}

.collapse {
  width: 12px;
  height: 12px;
  display: flex;
  margin-left: auto;
  border: 1px solid #7f9db3;
  background-color: #fff;
}

/* workspace */
.workspace {
  flex: 1;
  min-height: 0;
  position: relative;
  display: flex;
  background: linear-gradient(90deg, #f2f1f6, #f5f5f5 10%, #f5f6f6);
}

.scene {
  position: absolute;
  width: 100%;
  height: 100%;
}

.axis-label {
  font: 6px "Open Sans", sans-serif;
  fill: #222;
}

.axis-label.light {
  fill: #eee;
}

.tree-panel {
  width: 273px;
  position: relative;
  display: flex;
  flex-direction: column;
  padding-bottom: 35px;
}

.panel-bar {
  width: 269px;
  height: 8px;
  padding-right: 3px;
  border: solid #ccccd0;
  border-width: 1px 0;
  text-align: right;
  line-height: 5px;
  color: #888;
}

.panel-bar::after,
.splitter {
  content: '';
  width: 3px;
  height: 14px;
  border: solid #999;
  border-width: 0 1px;
}

.panel-bar::after {
  position: absolute;
  top: 0;
  right: 0;
}

.tree {
  flex: 1;
  padding: 4px 0 0 19px;
  list-style: none;
}

.tree li {
  height: 18px;
  display: flex;
  align-items: center;
  position: relative;
  white-space: nowrap;
}

.tree li::before {
  content: '';
  position: absolute;
  top: 0;
  bottom: 0;
  left: 2px;
  width: 1px;
  background-color: #b5b5ba;
}

.tree li:last-child::before {
  bottom: 9px;
}

.tree .root::before {
  top: 14px;
  left: 16px;
}

.tree .root {
  margin-left: -14px;
}

.tree svg {
  width: 12px;
  height: 12px;
  margin-right: 9px;
}

.tree .strong {
  color: #111;
}

.expander {
  width: 5px;
  height: 5px;
  position: relative;
  margin-right: 5px;
  border: 1px solid #888;
  background-color: #eee;
  color: #222;
  font-size: 6px;
  line-height: 3px;
  display: flex;
  align-items: center;
  justify-content: center;
}

.expander::after {
  content: '';
  position: absolute;
  left: 4px;
  width: 5px;
  height: 1px;
  background-color: #999;
}

.selected {
  height: 12px;
  padding: 0 1px;
  background-color: #0a66e8;
  color: #dff0ff;
  line-height: 12px;
}

.scrollbar {
  display: flex;
  align-items: center;
  gap: 1px;
  padding-left: 8px;
}

.thumb {
  flex: 0 0 212px;
  height: 6px;
  border: 1px solid #8d8d90;
  background-color: #b4b3b6;
}

.track {
  flex: 0 0 41px;
  height: 2px;
  background-color: #bbb;
}

.splitter {
  margin-left: auto;
}

.cursor {
  position: absolute;
  top: 298px;
  left: 259px;
  width: 6px;
  height: 10px;
}

/* robot dialog */
.dialog {
  position: absolute;
  top: 180px;
  right: 42px;
  width: 248px;
  border: 1px solid #5d97b8;
  background-color: #f0f0f0;
  color: #333;
  font-family: Roboto, "Open Sans", sans-serif;
  font-size: 6px;
  line-height: 8px;
}

.dialog-title {
  height: 14px;
  display: flex;
  align-items: center;
  gap: 14px;
  padding: 0 8px 0 3px;
  background-color: #0877d8;
  color: #d3ebff;
}

.dialog-title span {
  flex: 1;
}

.dialog-title button {
  width: 8px;
  font-size: 7px;
  font-weight: bold;
}

.dialog-body {
  padding: 6px 5px 5px 4px;
}

.legend {
  display: flex;
  align-items: center;
  gap: 3px;
}

.legend::after {
  content: '';
  flex: 1;
  height: 1px;
  background-color: #d0d0d0;
}

.reference {
  height: 14px;
  display: flex;
  align-items: center;
  padding-left: 3px;
}

.reference label {
  width: 30px;
}

.reference select {
  width: 182px;
  height: 12px;
  padding: 0 2px;
  border: 1px solid #aaa;
  appearance: none;
  background: #fff linear-gradient(#888, #888) no-repeat right 3px center / 3px 1px;
}

.params {
  display: grid;
  grid-template-columns: 34px 68px 42px 68px 1fr;
  grid-template-rows: 10px 15px 15px 15px;
  align-items: center;
  margin-bottom: 3px;
  background: linear-gradient(#c4c4c4, #c4c4c4) no-repeat 136px 0 / 1px 100%;
}

.params.increments {
  grid-template-rows: 19px 15px 15px 15px;
}

.params > label {
  grid-column: 1;
  padding-top: 2px;
}

.params .angle {
  grid-column: 4;
}

.col-head {
  text-align: center;
}

.btn {
  height: 10px;
  padding: 0 4px;
  border: 1px solid #d8d8d8;
  background-color: #e6e6e6;
  line-height: 8px;
}

.params .btn {
  justify-self: center;
}

.divider {
  width: 1px;
  height: 12px;
  background-color: #c4c4c4;
}

.spin {
  height: 11px;
  display: flex;
  border: 1px solid #888;
  border-right-color: #ccc;
  border-bottom-color: #ccc;
  background-color: #fff;
}

.spin input {
  flex: 1;
  min-width: 0;
  padding-left: 1px;
}

.spin button {
  width: 9px;
  position: relative;
  border: 1px solid #999;
  background-color: #e4e4e4;
}

.spin button::before,
.spin button::after {
  content: '';
  position: absolute;
  left: 1px;
  border: solid transparent;
  border-width: 0 2px 3px;
}

.spin button::before {
  top: 0;
  border-bottom-color: #222;
}

.spin button::after {
  bottom: 0;
  border-width: 3px 2px 0;
  border-top-color: #222;
}

.tools {
  grid-column: 3;
  display: flex;
  gap: 1px;
  padding-left: 9px;
}

.tools.rot {
  grid-column: 5;
  padding-left: 4px;
}

.tool {
  width: 10px;
  height: 11px;
  display: flex;
  border: solid #999;
  border-width: 0 1px 1px 0;
  background-color: #e9e9e6;
}

.tool svg {
  width: 9px;
  height: 10px;
}

.eraser {
  width: 18px;
  height: 18px;
  justify-self: center;
  align-items: center;
  justify-content: center;
}

.eraser svg {
  width: 14px;
  height: 14px;
}

.acquisition {
  height: 14px;
  display: flex;
  align-items: center;
  gap: 3px;
}

.acquisition .btn {
  padding: 0 3px;
}

.acquisition input {
  width: 46px;
  height: 10px;
  padding: 0 1px;
  border: 1px solid #999;
  background-color: #fff;
}

.acquisition .tools {
  padding: 0;
}

.acquisition .divider {
  margin: 0 6px 0 3px;
}

.dialog-foot {
  display: flex;
  justify-content: flex-end;
  padding: 10px 1px 0;
}

/* action bar */
.actionbar {
  position: absolute;
  bottom: 0;
  left: 228px;
  width: 505px;
  border-right: 1px solid #d5d5d5;
  background-color: #f4f4f4;
}

.action-tabs {
  display: flex;
  height: 11px;
  margin-left: 9px;
  background-color: #cfcfcf;
}

.action-tabs button {
  flex: 1 1 auto;
  border-right: 1px solid #bbb;
  font-size: 6px;
  line-height: 10px;
  white-space: nowrap;
}

.action-tabs .active {
  background-color: #f4f4f4;
}

.action-tools {
  height: 23px;
  display: flex;
  align-items: center;
  gap: 2px;
  border-left: 1px solid #ccc;
}

.action-tools button {
  flex: none;
  width: 18px;
  height: 18px;
  display: flex;
  align-items: center;
  justify-content: center;
}

.action-tools svg {
  width: 16px;
  height: 16px;
}

.action-tools .more {
  width: 8px;
  height: 23px;
  align-items: flex-start;
  border-right: 1px solid #ccc;
  color: #888;
}

.caret {
  width: 4px;
  height: 2px;
  background-color: #999;
  clip-path: polygon(0 0, 100% 0, 50% 100%);
}

.sep {
  width: 1px;
  height: 18px;
  background-color: #ccc;
}
```
